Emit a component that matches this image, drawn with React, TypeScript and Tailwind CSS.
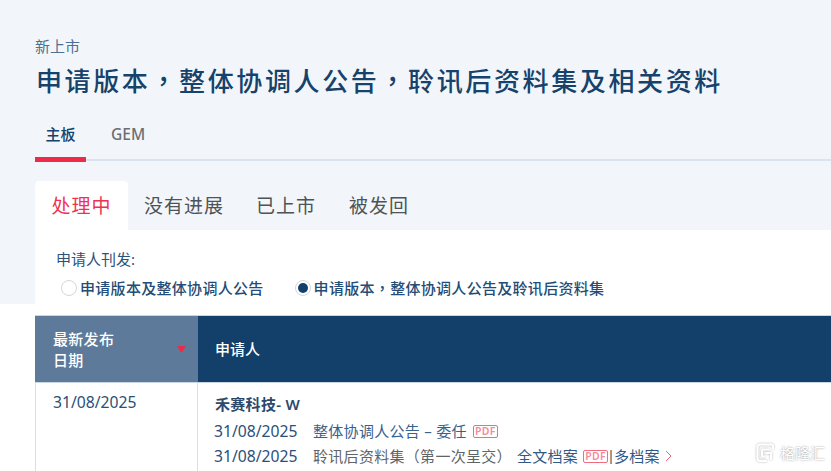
import React from "react";

const Pdf = () => (
  <span className="inline-flex items-center justify-center w-[25px] h-[13px] border-[1.5px] border-[#f26c80] rounded-[2px] text-[10.5px] leading-none font-semibold text-[#f58b9b] tracking-[0.3px]">
    PDF
  </span>
);

const Comma = () => <span className="font-['Noto_Sans_CJK_TC',sans-serif]">，</span>;

export default function App() {
  return (
    <div className="relative w-[831px] h-[471px] overflow-hidden bg-[linear-gradient(#f2f6fa_304px,#ffffff_304px)] font-['Noto_Sans','Noto_Sans_CJK_SC',sans-serif] pl-[35px] pt-[36px]">
      <div className="text-[15px] leading-[20px] text-[#4d7094]">新上市</div>
      <h1 className="mt-[2px] ml-[1px] text-[26px] leading-[44px] font-medium tracking-[2.62px] text-[#16426b] whitespace-nowrap">
        申请版本<Comma />整体协调人公告<Comma />聆讯后资料集及相关资料
      </h1>

      <div className="mt-[17px] flex h-[41px] border-b-2 border-[#d9e4ef] text-[15px] font-medium">
        <div className="w-[51px] h-[42px] border-b-[5px] border-[#ee2a49] flex justify-center pt-[4px] text-[#16426b] leading-[20px] shrink-0">主板</div>
        <div className="ml-[25px] pt-[4px] leading-[20px] text-[15.5px] text-[#6b6e72]">GEM</div>
      </div>

      <div className="mt-[20px] flex h-[49px] text-[19px] leading-[26px] tracking-[1px] text-[#4f5256]">
        <div className="w-[93px] bg-white rounded-t-[4px] flex justify-center pt-[12px] text-[#f0324f]">处理中</div>
        <div className="ml-[16px] pt-[12px]">没有进展</div>
        <div className="ml-[32px] pt-[12px]">已上市</div>
        <div className="ml-[33px] pt-[12px]">被发回</div>
      </div>

      <div className="bg-white h-[85px] pl-[21px] pt-[18px]">
        <div className="text-[15px] leading-[22px] text-[#2c5278]">申请人刊发:</div>
        <div className="mt-[7px] flex items-center text-[15px] leading-[22px] font-medium tracking-[0.3px] text-[#234d76]">
          <span className="ml-[5px] w-[16px] h-[16px] rounded-full border border-[#d4d6d8] bg-white shrink-0" />
          <span className="ml-[3px]">申请版本及整体协调人公告</span>
          <span className="ml-[31px] w-[16px] h-[16px] rounded-full border border-[#d4d6d8] bg-white shrink-0 flex items-center justify-center">
            <span className="w-[10px] h-[10px] rounded-full bg-[#12406b]" />
          </span>
          <span className="ml-[3px]">申请版本<Comma />整体协调人公告及聆讯后资料集</span>
        </div>
      </div>

      <div className="flex h-[68px] border-y border-[#c9d6e4]">
        <div className="w-[163px] bg-[#5d7a9b] pl-[18px] pt-[13px] relative text-[15px] leading-[21px] font-medium text-white tracking-[0.3px] shrink-0">
          最新发布<br />日期
          <svg className="absolute right-[12px] top-[30px]" width="9" height="7" viewBox="0 0 9 7"><path d="M0 0h9L4.500 7z" fill="#ee2a49" /></svg>
        </div>
        <div className="flex-1 bg-[#12406b] pl-[17px] flex items-center pt-[1px] text-[15px] font-medium text-white">申请人</div>
      </div>

      <div className="flex h-[100px]">
        <div className="w-[163px] border-l border-r border-[#d5e0ec] pl-[17px] pt-[8px] text-[15.7px] leading-[22px] text-[#2a5078] shrink-0">31/08/2025</div>
        <div className="pl-[16px] pt-[10px] text-[#2a5078]">
          <div className="ml-[1px] text-[15px] leading-[22px] font-semibold text-[#2b4a6b] tracking-[0.3px]">禾赛科技- W</div>
          <div className="mt-[5px] flex items-center text-[15.7px] leading-[22px]">
            <span className="w-[99px]">31/08/2025</span>
            <span className="text-[#38628f] text-[15px] tracking-[0.3px]">整体协调人公告 – 委任</span>
            <span className="ml-[6px] flex"><Pdf /></span>
          </div>
          <div className="mt-[3px] flex items-center text-[15.7px] leading-[22px] whitespace-nowrap">
            <span className="w-[99px]">31/08/2025</span>
            <span className="text-[#5f6468] text-[15px] tracking-[0.3px]">聆讯后资料集（第一次呈交）</span>
            <span className="ml-[5px] text-[#2f5a86] text-[15px] tracking-[0.3px]">全文档案</span>
            <span className="ml-[5px] flex"><Pdf /></span>
            <span className="px-[1px] font-['Liberation_Sans',sans-serif] text-[15px] text-[#5f6468]">|</span>
            <span className="text-[#2f5a86] text-[15px] tracking-[0.3px]">多档案</span>
            <svg className="ml-[5px]" width="7" height="12" viewBox="0 0 7 12" fill="none"><path d="M1 1l5 5-5 5" stroke="#f0617a" strokeWidth="1" /></svg>
          </div>
        </div>
      </div>

      <div className="absolute left-[756px] top-[443px] flex items-center gap-[5px]">
        <svg width="19" height="20" viewBox="0 0 19 20" fill="none" style={{ filter: "drop-shadow(0 0 1px rgba(0,0,0,.3))" }}>
          <path d="M17 6V3.500Q17 1.500 15 1.500H4Q1.500 1.500 1.500 4V15Q1.500 18 4 18H11" stroke="#fff" strokeWidth="2" />
          <path d="M6 6.500H13M6 6.500V13.500H9M9.500 10H15V17" stroke="#fff" strokeWidth="2" />
        </svg>
        <span className="text-[15px] leading-[20px] text-white [text-shadow:0_0_2px_rgba(0,0,0,0.45)]">格隆汇</span>
      </div>
    </div>
  );
}
